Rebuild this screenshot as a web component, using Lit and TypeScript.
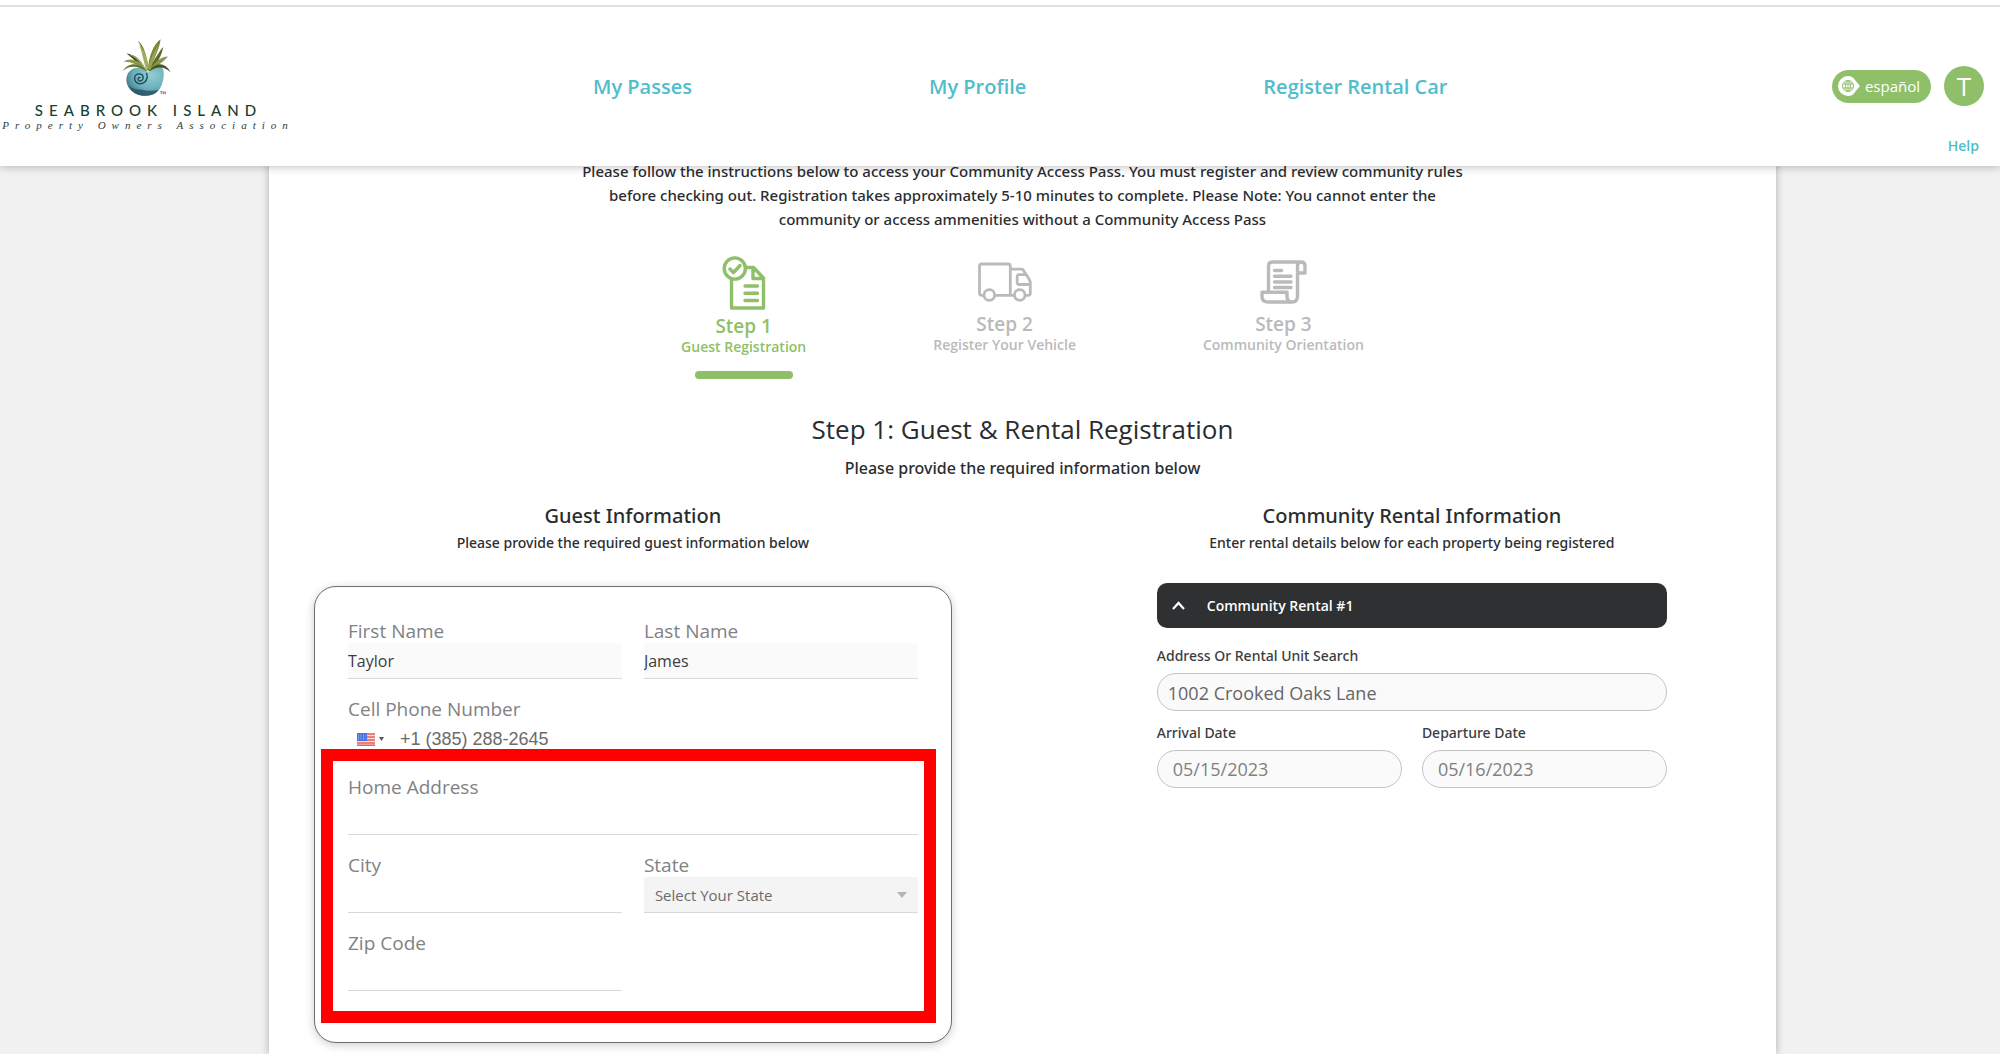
import { LitElement, html, css, svg } from "lit";
import { customElement, property } from "lit/decorators.js";

const leaves: Array<[string, string]> = [
  ["M441 212C420 190 404 162 380 161C396 172 412 190 441 212Z", "#3c4a22"],
  ["M441 212C430 172 428 142 414 124C424 128 440 150 446 210Z", "#7f8c3c"],
  ["M444 212C446 170 462 132 482 119C480 145 462 175 450 214Z", "#77853a"],
  ["M446 212C462 180 482 150 490 142C486 166 470 196 452 212Z", "#59682b"],
  ["M446 214C462 188 484 170 504 170C490 186 470 200 454 212Z", "#8a9549"],
  ["M446 214C468 186 496 186 512 218C494 198 470 200 450 213Z", "#4a5624"],
  ["M442 214C420 180 390 172 372 186C394 184 420 198 442 214Z", "#8d9a4b"],
  ["M442 214C420 186 386 186 368 214C390 194 416 198 440 214Z", "#66742f"],
  ["M440 212C424 176 400 160 388 166C406 170 424 190 440 212Z", "#97a452"],
  ["M438 206C430 180 426 156 418 134C432 152 446 176 446 208Z", "#a3ad62"],
  ["M446 208C450 180 462 156 476 134C470 160 458 182 452 210Z", "#98a453"],
];

@customElement("brand-logo")
export class BrandLogo extends LitElement {
  static styles = css`
    :host {
      display: flex;
      flex-direction: column;
      align-items: center;
      width: 292px;
    }
    svg {
      display: block;
      width: 52px;
      height: 59px;
    }
    .name {
      margin-top: 4px;
      padding-left: 5px;
      font: 500 15px/18px Lato, "Open Sans", sans-serif;
      letter-spacing: 6px;
      color: #16402f;
      white-space: nowrap;
    }
    .org {
      padding-left: 4px;
      font: italic 11px/12px "Liberation Serif", serif;
      letter-spacing: 6px;
      color: #2c3d36;
      white-space: nowrap;
    }
  `;

  render() {
    return html`
      <svg viewBox="361 115 155 176" aria-hidden="true">
        <defs>
          <radialGradient id="shell" cx="0.65" cy="0.3" r="0.75">
            <stop offset="0" stop-color="#93cdd4" />
            <stop offset="0.6" stop-color="#6db0bc" />
            <stop offset="1" stop-color="#3a7484" />
          </radialGradient>
        </defs>
        <path
          fill="url(#shell)"
          d="M380 244C378 218 396 204 416 204C432 204 440 212 446 218C454 204 470 198 486 202C496 214 492 246 480 266C468 284 448 289 428 287C402 284 383 266 380 244Z"
        />
        <path fill="#28505e" opacity="0.75" d="M386 256C402 272 420 266 440 272C456 274 466 270 476 270C466 285 448 289 428 287C408 285 392 274 386 256Z" />
        <path
          fill="none"
          stroke="#1f4552"
          stroke-width="4"
          d="M422 234C418 230 412 236 416 241C422 247 432 240 430 231C427 219 408 219 405 232C402 248 420 258 434 247C442 240 443 228 440 219"
        />
        ${leaves.map(([d, fill]) => svg`<path d=${d} fill=${fill} />`)}
        <path fill="none" stroke="#555" stroke-width="2" d="M481 275H488M484 275V283M490 283V275L493 280L496 275V283" />
      </svg>
      <div class="name">SEABROOK ISLAND</div>
      <div class="org">Property Owners Association</div>
    `;
  }
}

@customElement("site-header")
export class SiteHeader extends LitElement {
  static styles = css`
    :host {
      display: block;
      position: relative;
      z-index: 1;
      background: #fff;
      box-shadow: 0 1px 8px rgba(0, 0, 0, 0.25);
      font-family: "Open Sans", "Noto Sans", sans-serif;
    }
    .rule {
      margin-top: 5px;
      border-top: 2px solid #e0e0e0;
    }
    .bar {
      display: flex;
      box-sizing: border-box;
      min-height: 159px;
    }
    brand-logo {
      padding-top: 31px;
      flex: none;
    }
    nav {
      flex: 1;
      display: flex;
      gap: 237px;
      padding: 66px 0 0 301px;
    }
    a {
      color: #4fbdcb;
      text-decoration: none;
      white-space: nowrap;
    }
    nav a {
      font-size: 20px;
      line-height: 28px;
      font-weight: 600;
    }
    .tools {
      display: flex;
      flex-direction: column;
      align-items: flex-end;
      gap: 30px;
      padding: 59px 16px 0 0;
    }
    .row {
      display: flex;
      align-items: center;
      gap: 13px;
    }
    button {
      border: 0;
      background: #8fbf69;
      color: #fff;
      font-family: inherit;
      cursor: pointer;
    }
    .lang {
      display: flex;
      align-items: center;
      gap: 5px;
      height: 33px;
      padding: 0 11px 0 6px;
      border-radius: 17px;
      font-size: 15px;
    }
    .lang svg {
      width: 22px;
      height: 20px;
    }
    .avatar {
      width: 40px;
      height: 40px;
      padding: 0;
      border-radius: 50%;
      font-size: 26px;
      line-height: 40px;
    }
    .help {
      padding-right: 5px;
      font-size: 14px;
      line-height: 20px;
      font-weight: 600;
    }
  `;

  render() {
    return html`
      <div class="rule"></div>
      <div class="bar">
        <brand-logo></brand-logo>
        <nav>
          <a href="#passes">My Passes</a>
          <a href="#profile">My Profile</a>
          <a href="#car">Register Rental Car</a>
        </nav>
        <div class="tools">
          <div class="row">
            <button class="lang">
              <svg viewBox="0 0 22 20" aria-hidden="true">
                <path fill="#fff" d="M10 0C13 0 15 1 17 4L22 10L17 16C15 19 13 20 10 20A10 10 0 0 1 10 0Z" />
                <g fill="none" stroke="#8fbf69" stroke-width="1">
                  <circle cx="10" cy="10" r="5.500" />
                  <ellipse cx="10" cy="10" rx="2.500" ry="5.500" />
                  <path d="M10 4.500V15.500M5 8H15M5 12H15" />
                </g>
              </svg>
              <span>español</span>
            </button>
            <button class="avatar">T</button>
          </div>
          <a class="help" href="#help">Help</a>
        </div>
      </div>
    `;
  }
}

const stepIcons = {
  form: svg`<svg viewBox="0 0 44 54" width="44" height="54" fill="none" stroke="currentColor" stroke-width="3.400" stroke-linecap="round" stroke-linejoin="round">
    <circle cx="12.800" cy="12.500" r="10.600" />
    <path d="M8 13L11.500 16.500L18 9.500M9.500 24V52H41.500V22L31.500 11.500H24.500M31 12V22.500H41M23 30H35.500M23 37.200H35.500M23 44.500H35.500" />
  </svg>`,
  truck: svg`<svg viewBox="0 0 54 40" width="54" height="40" fill="none" stroke="currentColor" stroke-width="2.800" stroke-linejoin="round">
    <path d="M5.500 33.300H3.500Q1.500 33.300 1.500 31.300V4Q1.500 2 3.500 2H30Q32.300 2 32.300 4V33.300M17 33.300H36M32.300 7.200H43.500Q45 7.200 45.700 8.700L51 17Q52.300 19 52.300 21V31.300Q52.300 33.300 50.300 33.300H47.500M52 22.500H41Q39.200 22.500 39.200 20.500V14.500Q39.200 12.700 41 12.700H48.300" />
    <circle cx="11.300" cy="33" r="5.300" />
    <circle cx="41.700" cy="33" r="5.300" />
  </svg>`,
  scroll: svg`<svg viewBox="0 0 47 44" width="47" height="44" fill="none" stroke="currentColor" stroke-width="3.400" stroke-linecap="round" stroke-linejoin="round">
    <path d="M8.500 31V6Q8.500 2 12.500 2H41Q45 2 45 6V13H37.500M41 2Q37.500 2 37.500 6V36Q37.500 42 32 42H8Q2 42 2 36.500V32.300H27V36.500Q27 42 32 42M14.500 10.500H21.500M14.500 16.300H31M14.500 22H31M14.500 27.500H31" />
  </svg>`,
};

@customElement("progress-step")
export class ProgressStep extends LitElement {
  @property() icon: keyof typeof stepIcons = "form";
  @property() label = "";
  @property() caption = "";

  static styles = css`
    :host {
      display: flex;
      flex-direction: column;
      align-items: center;
      color: #bababa;
      font-family: "Open Sans", "Noto Sans", sans-serif;
      font-weight: 600;
      white-space: nowrap;
    }
    :host([active]) {
      color: #8fbf69;
    }
    .icon {
      display: flex;
      align-items: center;
      height: 52px;
    }
    :host([active]) .icon {
      height: 54px;
    }
    .label {
      margin-top: 4px;
      font-size: 19px;
      line-height: 24px;
    }
    .caption {
      font-size: 14px;
      line-height: 18px;
    }
    .marker {
      width: 98px;
      height: 8px;
      margin-top: 15px;
      border-radius: 4px;
    }
    :host([active]) .marker {
      background: currentColor;
    }
  `;

  render() {
    return html`
      <div class="icon">${stepIcons[this.icon]}</div>
      <div class="label">${this.label}</div>
      <div class="caption">${this.caption}</div>
      <div class="marker"></div>
    `;
  }
}

@customElement("guest-form")
export class GuestForm extends LitElement {
  static styles = css`
    :host {
      display: block;
      font-family: "Open Sans", "Noto Sans", sans-serif;
    }
    .card {
      position: relative;
      box-sizing: border-box;
      display: grid;
      grid-template-columns: 1fr 1fr;
      gap: 18px 22px;
      padding: 32px 33px 51px;
      border: 1px solid #6d6d6d;
      border-radius: 22px;
      background: #fff;
      box-shadow: 0 2px 10px rgba(0, 0, 0, 0.2);
    }
    .wide {
      grid-column: 1 / -1;
    }
    .field {
      display: flex;
      flex-direction: column;
      min-width: 0;
    }
    label {
      font-size: 19px;
      line-height: 24px;
      color: #808285;
    }
    input,
    select {
      box-sizing: border-box;
      width: 100%;
      height: 36px;
      margin: 0;
      padding: 0;
      border: 0;
      border-bottom: 1px solid #d8d8d8;
      border-radius: 0;
      background: transparent;
      font-family: inherit;
      font-size: 16px;
      color: #3c3c3c;
      outline: none;
    }
    .filled {
      background: #fafafa;
    }
    .pick {
      display: grid;
      align-items: center;
    }
    .pick > * {
      grid-area: 1 / 1;
    }
    .pick svg {
      justify-self: end;
      margin-right: 11px;
      pointer-events: none;
    }
    select {
      appearance: none;
      padding: 0 11px;
      background: #f4f4f4;
      font-size: 15px;
      color: #6b6b6b;
    }
    .phone {
      display: flex;
      align-items: center;
      height: 36px;
    }
    .phone button {
      display: flex;
      align-items: center;
      gap: 4px;
      padding: 0 0 0 9px;
      border: 0;
      background: none;
    }
    .phone input {
      flex: 1;
      border: 0;
      padding-left: 16px;
      font-family: "Liberation Sans", Arial, sans-serif;
      font-size: 18px;
      color: #6b6b6b;
    }
    .highlight {
      position: absolute;
      inset: 162px 15px 19px 6px;
      border: 12px solid #f00;
      pointer-events: none;
    }
  `;

  private field(id: string, label: string, value = "", cls = "") {
    return html`<div class="field ${cls}">
      <label for=${id}>${label}</label>
      <input id=${id} class=${value ? "filled" : ""} type="text" .value=${value} />
    </div>`;
  }

  render() {
    return html`
      <form class="card">
        ${this.field("first", "First Name", "Taylor")} ${this.field("last", "Last Name", "James")}
        <div class="field wide">
          <label for="phone">Cell Phone Number</label>
          <div class="phone">
            <button type="button" aria-label="Country code">
              <svg width="18" height="13" viewBox="0 0 18 13">
                <rect width="18" height="13" fill="#f4dada" />
                <path stroke="#e8635f" stroke-width="1.500" d="M0 1H18M0 4H18M0 7H18M0 10H18M0 12.300H18" />
                <rect width="10" height="8" fill="#4a6fe0" />
                <path stroke="#b9c8f8" stroke-width="1" stroke-dasharray="1 1.500" d="M1 2H9M1 4H9M1 6H9" />
              </svg>
              <svg width="5" height="4" viewBox="0 0 5 4"><path fill="#555" d="M0 0H5L2.500 4Z" /></svg>
            </button>
            <input id="phone" type="tel" .value=${"+1 (385) 288-2645"} />
          </div>
        </div>
        ${this.field("address", "Home Address", "", "wide")} ${this.field("city", "City")}
        <div class="field">
          <label for="state">State</label>
          <div class="pick">
            <select id="state">
              <option>Select Your State</option>
            </select>
            <svg width="10" height="6" viewBox="0 0 10 6"><path fill="#b5b5b5" d="M0 0H10L5 6Z" /></svg>
          </div>
        </div>
        ${this.field("zip", "Zip Code")}
        <div class="highlight"></div>
      </form>
    `;
  }
}

@customElement("rental-form")
export class RentalForm extends LitElement {
  static styles = css`
    :host {
      display: block;
      font-family: "Open Sans", "Noto Sans", sans-serif;
    }
    .toggle {
      display: flex;
      align-items: center;
      gap: 22px;
      width: 100%;
      height: 45px;
      padding: 0 15px;
      border: 0;
      border-radius: 10px;
      background: #2e3032;
      color: #fff;
      font: inherit;
      font-size: 14px;
      font-weight: 600;
      cursor: pointer;
    }
    form {
      display: grid;
      grid-template-columns: 1fr 1fr;
      gap: 11px 20px;
      padding-top: 17px;
    }
    .wide {
      grid-column: 1 / -1;
    }
    .field {
      display: flex;
      flex-direction: column;
      gap: 6px;
      min-width: 0;
    }
    label {
      font-family: "Noto Sans", "Open Sans", sans-serif;
      font-size: 14px;
      line-height: 22px;
      font-weight: 500;
      color: #3a3d40;
    }
    input {
      box-sizing: border-box;
      width: 100%;
      height: 38px;
      padding: 0 15px;
      border: 1px solid #c4c4c4;
      border-radius: 19px;
      background: #fafafa;
      font-family: inherit;
      font-size: 18px;
      color: #808080;
      outline: none;
    }
    .search {
      padding: 2px 10px 0;
      color: #666;
    }
  `;

  render() {
    return html`
      <button class="toggle" aria-expanded="true">
        <svg width="13" height="9" viewBox="0 0 13 9" fill="none" stroke="#fff" stroke-width="2.200">
          <path d="M1 8L6.500 2L12 8" />
        </svg>
        <span>Community Rental #1</span>
      </button>
      <form>
        <div class="field wide">
          <label for="unit">Address Or Rental Unit Search</label>
          <input id="unit" class="search" type="text" .value=${"1002 Crooked Oaks Lane"} />
        </div>
        <div class="field">
          <label for="arrival">Arrival Date</label>
          <input id="arrival" type="text" .value=${"05/15/2023"} />
        </div>
        <div class="field">
          <label for="departure">Departure Date</label>
          <input id="departure" type="text" .value=${"05/16/2023"} />
        </div>
      </form>
    `;
  }
}

@customElement("app-root")
export class AppRoot extends LitElement {
  static styles = css`
    :host {
      display: flex;
      flex-direction: column;
      height: 100vh;
      overflow: hidden;
      background: #f1f1f1;
      font-family: "Noto Sans", "Open Sans", sans-serif;
      font-weight: 500;
      color: #2a2d30;
    }
    site-header {
      flex: none;
    }
    main {
      flex: 1;
      margin: -7px 224px 0 269px;
      background: #fff;
      box-shadow: 0 0 8px rgba(0, 0, 0, 0.28);
    }
    guest-form,
    rental-form {
      font-weight: 400;
    }
    h1,
    h2,
    p {
      margin: 0;
      text-align: center;
      font-weight: 500;
    }
    .intro {
      max-width: 900px;
      margin: 0 auto;
      font-size: 15px;
      line-height: 24px;
    }
    .steps {
      display: flex;
      justify-content: center;
      align-items: flex-start;
      gap: 127px;
      padding-top: 25px;
    }
    h1 {
      padding-top: 32px;
      font-family: "Open Sans", "Noto Sans", sans-serif;
      font-size: 26px;
      line-height: 36px;
    }
    .lead {
      padding-top: 9px;
      font-size: 16px;
      line-height: 24px;
    }
    .columns {
      display: flex;
      align-items: flex-start;
      gap: 205px;
      padding: 22px 109px 12px 45px;
    }
    .guest {
      flex: 5;
      min-width: 0;
    }
    .rental {
      flex: 4;
      min-width: 0;
    }
    h2 {
      font-size: 20px;
      line-height: 28px;
    }
    .note {
      padding-top: 2px;
      font-size: 14px;
      line-height: 22px;
    }
    guest-form {
      padding-top: 32px;
    }
    rental-form {
      padding-top: 29px;
    }
  `;

  render() {
    return html`
      <site-header></site-header>
      <main>
        <p class="intro">
          Please follow the instructions below to access your Community Access Pass. You must register and review
          community rules before checking out. Registration takes approximately 5-10 minutes to complete. Please Note:
          You cannot enter the community or access ammenities without a Community Access Pass
        </p>
        <div class="steps">
          <progress-step active icon="form" label="Step 1" caption="Guest Registration"></progress-step>
          <progress-step icon="truck" label="Step 2" caption="Register Your Vehicle"></progress-step>
          <progress-step icon="scroll" label="Step 3" caption="Community Orientation"></progress-step>
        </div>
        <h1>Step 1: Guest &amp; Rental Registration</h1>
        <p class="lead">Please provide the required information below</p>
        <div class="columns">
          <section class="guest">
            <h2>Guest Information</h2>
            <p class="note">Please provide the required guest information below</p>
            <guest-form></guest-form>
          </section>
          <section class="rental">
            <h2>Community Rental Information</h2>
            <p class="note">Enter rental details below for each property being registered</p>
            <rental-form></rental-form>
          </section>
        </div>
      </main>
    `;
  }
}
